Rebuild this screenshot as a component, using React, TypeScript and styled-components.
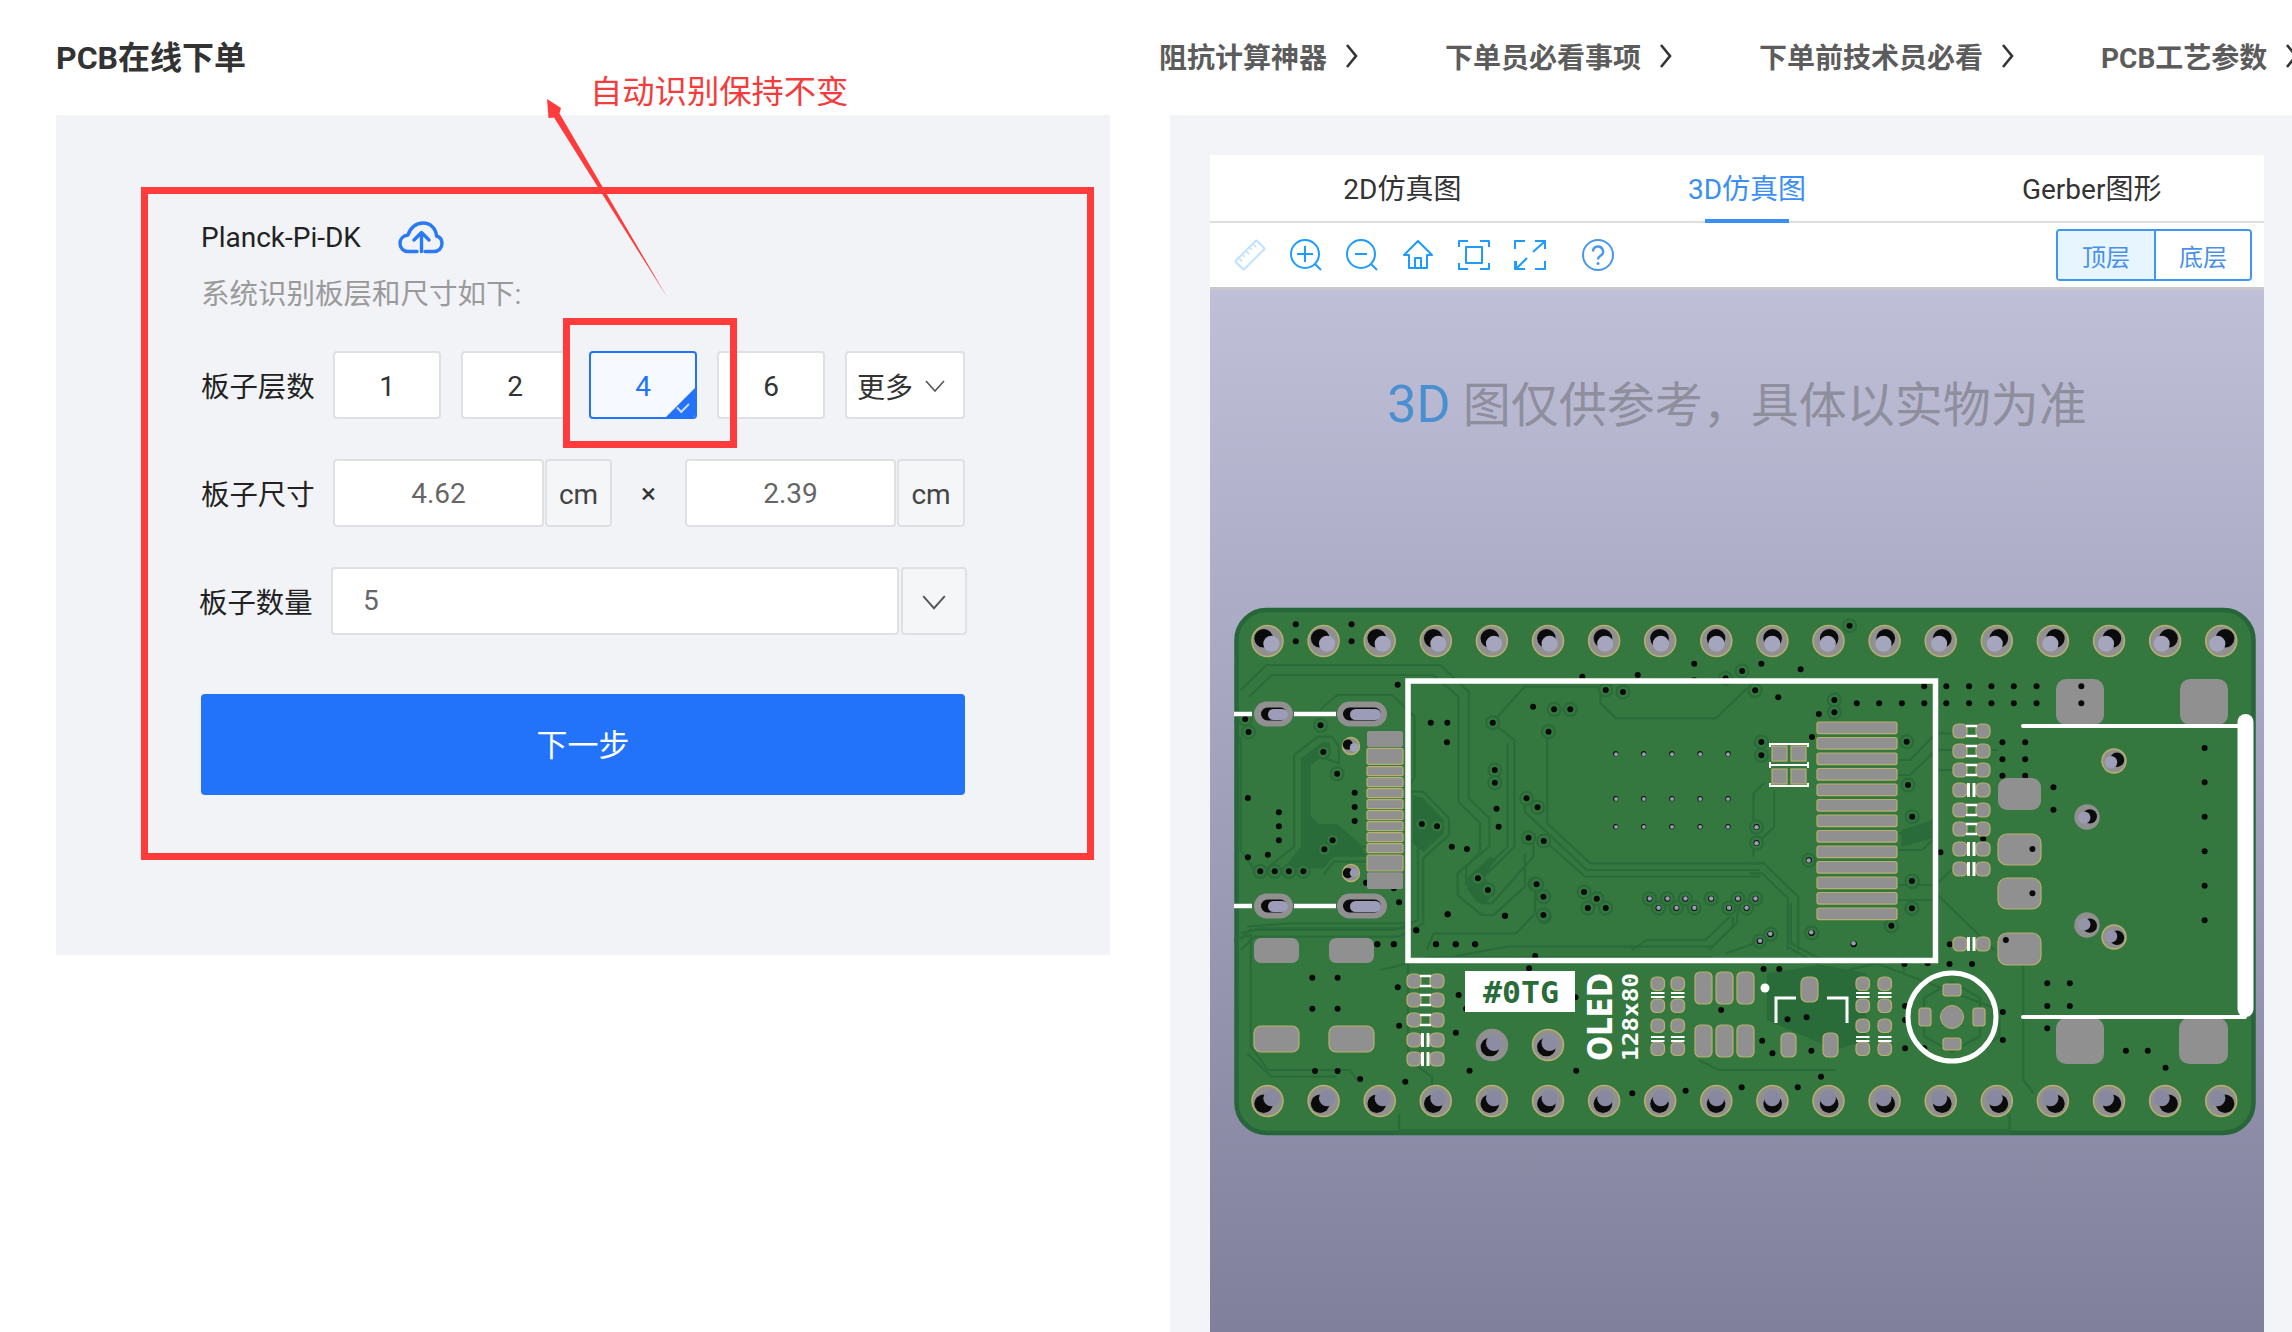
import React from 'react';
import styled, { createGlobalStyle } from 'styled-components';

const FONT = `Roboto, "Noto Sans CJK SC", "Noto Sans", sans-serif`;

const Global = createGlobalStyle`
  html, body { margin: 0; padding: 0; background: #fff; overflow: hidden; }
  * { box-sizing: border-box; }
  body { font-family: ${FONT}; }
`;

const Page = styled.div`
  position: relative;
  width: 2292px;
  height: 1332px;
  overflow: hidden;
  background: #fff;
`;

const Header = styled.header`
  height: 115px;
  padding: 0 0 5px 56px;
  display: flex;
  align-items: center;
  white-space: nowrap;
`;

const Title = styled.h1`
  margin: 0;
  width: 1103px;
  flex: none;
  font-size: 32px;
  font-weight: 700;
  color: #333;
`;

const Nav = styled.nav`
  padding-top: 2px;
  display: flex;
  align-items: center;
`;

const NavItem = styled.a`
  display: flex;
  align-items: center;
  margin-right: 86px;
  font-size: 28px;
  font-weight: 700;
  color: #5c5c5c;
  flex: none;

  svg {
    margin-left: 18px;
    color: #333;
  }
`;

const Main = styled.main`
  display: flex;
  align-items: flex-start;
  gap: 60px;
  padding-left: 56px;
`;

const OrderPanel = styled.section`
  width: 1054px;
  height: 840px;
  flex: none;
  padding: 102px 0 0 145px;
  background: #f1f3f7;
`;

const FileRow = styled.div`
  height: 40px;
  display: flex;
  align-items: center;
  gap: 37px;
  font-size: 28px;
  color: #222;
`;

const Hint = styled.div`
  margin-top: 18px;
  margin-bottom: -2px;
  height: 40px;
  line-height: 40px;
  font-size: 28.500px;
  color: #9a9a9a;
`;

const FormRow = styled.div<{ $top: number; $shift?: number }>`
  margin-top: ${(p) => p.$top}px;
  margin-left: ${(p) => p.$shift ?? 0}px;
  height: 68px;
  display: flex;
  align-items: center;
`;

const Label = styled.label`
  width: 132px;
  flex: none;
  margin-top: -2px;
  font-size: 28.400px;
  color: #222;
`;

const LayerButtons = styled.div`
  display: flex;
  gap: 20px;
`;

const LayerButton = styled.button<{ $active?: boolean }>`
  position: relative;
  width: 108px;
  height: 68px;
  padding: 2px 0 0;
  overflow: hidden;
  font-family: ${FONT};
  font-size: 28px;
  color: ${(p) => (p.$active ? '#2273f9' : '#333')};
  background: ${(p) => (p.$active ? '#f6f9ff' : '#fff')};
  border: 2px solid ${(p) => (p.$active ? '#2273f9' : '#dfe0e4')};
  border-radius: 4px;

  ${(p) =>
    p.$active &&
    `
    &::after {
      content: '';
      position: absolute;
      right: 0;
      bottom: 0;
      width: 29px;
      height: 29px;
      background: #2273f9;
      clip-path: polygon(100% 0, 100% 100%, 0 100%);
    }
    &::before {
      content: '';
      position: absolute;
      z-index: 1;
      right: 6px;
      bottom: 7px;
      width: 10px;
      height: 5px;
      border-left: 2px solid #c9dcff;
      border-bottom: 2px solid #c9dcff;
      transform: rotate(-45deg);
    }
  `}
`;

const MoreButton = styled(LayerButton)`
  width: 120px;
  padding-right: 8px;
  display: flex;
  align-items: center;
  justify-content: center;
  gap: 12px;
  color: #333;
`;

const TextBox = styled.div<{ $width: number; $align?: string }>`
  width: ${(p) => p.$width}px;
  height: 68px;
  flex: none;
  display: flex;
  align-items: center;
  justify-content: ${(p) => p.$align ?? 'center'};
  padding-left: ${(p) => (p.$align ? '30px' : '0')};
  padding-bottom: ${(p) => (p.$align ? '2px' : '0')};
  font-size: 28px;
  color: #666;
  background: #fff;
  border: 2px solid #dfe0e4;
  border-radius: 4px;
`;

const AddonBox = styled.div<{ $width: number; $left?: number }>`
  width: ${(p) => p.$width}px;
  height: 68px;
  flex: none;
  margin-left: ${(p) => p.$left ?? 1}px;
  padding-top: 3px;
  display: flex;
  align-items: center;
  justify-content: center;
  font-size: 28px;
  color: #444;
  background: #f5f6f8;
  border: 2px solid #dfe0e4;
  border-radius: 4px;
`;

const Times = styled.span`
  width: 73px;
  flex: none;
  text-align: center;
  font-size: 28px;
  color: #333;
`;

const NextButton = styled.button`
  display: block;
  margin-top: 59px;
  width: 764px;
  height: 101px;
  padding: 0 0 4px;
  font-family: ${FONT};
  font-size: 31px;
  color: #fff;
  background: #2273f9;
  border: 0;
  border-radius: 4px;
`;

const PreviewPanel = styled.section`
  width: 1122px;
  height: 1217px;
  flex: none;
  padding: 40px 28px 0 40px;
  background: #f2f4f8;
`;

const Viewer = styled.div`
  height: 100%;
  display: flex;
  flex-direction: column;
  background: #fff;
`;

const Tabs = styled.div`
  height: 68px;
  flex: none;
  padding-left: 20px;
  display: flex;
  border-bottom: 2px solid #dedede;
`;

const Tab = styled.div<{ $active?: boolean }>`
  position: relative;
  flex: 1;
  padding-bottom: 2px;
  display: flex;
  align-items: center;
  justify-content: center;
  font-size: 28px;
  color: ${(p) => (p.$active ? '#3a8ef6' : '#333')};

  ${(p) =>
    p.$active &&
    `
    &::after {
      content: '';
      position: absolute;
      left: 50%;
      bottom: -2px;
      width: 84px;
      height: 4px;
      margin-left: -42px;
      background: #3a8ef6;
    }
  `}
`;

const Toolbar = styled.div`
  height: 67px;
  flex: none;
  padding: 0 12px 0 24px;
  display: flex;
  align-items: center;
  gap: 24px;
  color: #1e9bff;
  border-bottom: 3px solid #c9c9cd;
`;

const HelpSlot = styled.span`
  margin-left: 12px;
  display: flex;
  color: #4a96f0;
`;

const SideToggle = styled.div`
  margin-left: auto;
  display: flex;
  height: 52px;
  border: 2px solid #3f97f5;
  border-radius: 4px;
  overflow: hidden;
`;

const SideButton = styled.div<{ $active?: boolean }>`
  width: 96px;
  display: flex;
  align-items: center;
  justify-content: center;
  font-size: 24px;
  color: #4a90e8;
  background: ${(p) => (p.$active ? '#e6f5ff' : '#fff')};
  & + & {
    border-left: 2px solid #3f97f5;
  }
`;

const Canvas = styled.div`
  flex: 1;
  padding-top: 85px;
  background: linear-gradient(#bfbfd8, #80809c);
`;

const Notice = styled.div`
  height: 60px;
  line-height: 60px;
  text-align: center;
  font-size: 48px;
  color: #8e8e9c;

  b {
    font-size: 52px;
    font-weight: 400;
    color: #4a8fd0;
  }
`;

const Board = styled.svg`
  display: block;
  margin: 171px 0 0 24px;
`;

const MarkBox = styled.div<{ $x: number; $y: number; $w: number; $h: number }>`
  position: absolute;
  left: ${(p) => p.$x}px;
  top: ${(p) => p.$y}px;
  width: ${(p) => p.$w}px;
  height: ${(p) => p.$h}px;
  border: 7px solid #ff3b3b;
  pointer-events: none;
`;

const MarkText = styled.div`
  position: absolute;
  left: 590px;
  top: 70px;
  font-size: 32.300px;
  line-height: 44px;
  color: #f53b3b;
`;

const MarkArrow = styled.svg`
  position: absolute;
  left: 530px;
  top: 90px;
`;

/* ---- icons ---- */
const Chevron = ({ dir, size = 20, color = '#555' }: { dir: 'right' | 'down'; size?: number; color?: string }) =>
  dir === 'right' ? (
    <svg width="14" height="26" viewBox="0 0 14 26" fill="none" stroke="currentColor" strokeWidth="2.6">
      <path d="M2 2l9 11-9 11" />
    </svg>
  ) : (
    <svg width={size} height={size * 0.6} viewBox="0 0 20 12" fill="none" stroke={color} strokeWidth="1.6">
      <path d="M1 1l9 10 9-10" />
    </svg>
  );

const CloudIcon = () => (
  <svg width="46" height="33" viewBox="0 0 46 33" fill="none" stroke="#2a7af5" strokeWidth="3.400" strokeLinecap="round" strokeLinejoin="round">
    <path d="M19 30.500H10C5.500 30.500 2 27 2 22.500c0-4.500 3.300-8 8-8.500C12 7 18 2 25 2c7.500 0 13 5.500 13.500 13 3.500 1 5.500 4 5.500 7.500 0 4.500-3.500 8-8 8h-9" />
    <path d="M23.500 30.500V11.500M16 19l7.500-7.500L31 19" />
  </svg>
);

const IconSvg: React.FC<{ children: React.ReactNode }> = ({ children }) => (
  <svg width="32" height="32" viewBox="0 0 32 32" fill="none" stroke="currentColor" strokeWidth="2" strokeLinejoin="round">
    {children}
  </svg>
);

const ToolIcons = () => (
  <>
    <IconSvg>
      <g stroke="#bfe2ff" transform="rotate(-45 16 16)">
        <rect x="1" y="10" width="30" height="12" rx="1.500" />
        <path d="M6 10v5M11 10v3.500M16 10v5M21 10v3.500M26 10v5" strokeWidth="1.500" />
      </g>
    </IconSvg>
    <IconSvg>
      <circle cx="15" cy="15" r="14" />
      <path d="M15 7v16M7 15h16M25 25l6 6" />
    </IconSvg>
    <IconSvg>
      <circle cx="15" cy="15" r="14" />
      <path d="M9 15h12M25 25l6 6" />
    </IconSvg>
    <IconSvg>
      <path d="M16 2L2 16h5v13h18V16h5z" />
      <path d="M13 29V19h6v10" />
    </IconSvg>
    <IconSvg>
      <path d="M1 8V2h9M22 2h9v6M31 24v6h-9M10 30H1v-6" />
      <rect x="8" y="8" width="16" height="16" />
    </IconSvg>
    <IconSvg>
      <path d="M1 10V2h10M21 2h10v8M31 22v8H21M11 30H1v-8" />
      <path d="M19 13L30 3M24 2h7v7M13 19L3 29M2 22v8h8" />
    </IconSvg>
    <HelpSlot>
      <IconSvg>
        <circle cx="16" cy="16" r="15" />
        <path d="M11 12.500a5 5 0 1 1 7.500 4.300c-1.700 1-2.500 1.700-2.500 3.700" strokeWidth="2.400" />
        <circle cx="16" cy="24.500" r="1.500" fill="currentColor" stroke="none" />
      </IconSvg>
    </HelpSlot>
  </>
);

/* ---- board drawing, coordinates are page pixels ---- */
type P = [number, number];
const z4 = (x: number, y: number): P => [1220 + x * 0.3444, 590 + y / 3];
const z5 = (x: number, y: number): P => [1750 + x * 0.3444, 590 + y / 3];
const z6 = (x: number, y: number): P => [1220 + x * 0.6837, 880 + y / 3];

const GOLD = '#b9b06e';
const PAD = '#909090';
const TRACE = '#2a6b3a';
const BOARD = '#34773f';
const HOLE_COLS = Array.from({ length: 18 }, (_, i) => 1267.5 + i * 56.1);

const pairs = (s: string, map: (x: number, y: number) => P): P[] => {
  const n = s.trim().split(/[\s,]+/).map(Number);
  const out: P[] = [];
  for (let i = 0; i < n.length; i += 2) out.push(map(n[i], n[i + 1]));
  return out;
};

const Through = ({ x, y, r = 15.500, gold = true }: { x: number; y: number; r?: number; gold?: boolean }) => {
  const ox = ((1745 - x) / 480) * 6.500;
  const oy = ((870 - y) / 230) * 4.500;
  const shade = Math.round(168 - ((y - 600) / 540) * 34);
  return (
    <g>
      <circle cx={x} cy={y} r={r} fill={PAD} stroke={gold ? GOLD : PAD} strokeWidth="1.500" />
      <circle cx={x - ox * 0.6} cy={y - oy * 0.6} r={r * 0.6} fill="#0b0b0b" />
      <circle cx={x + ox * 0.6} cy={y + oy * 0.6} r={r * 0.52} fill={`rgb(${shade},${shade},${shade + 24})`} />
    </g>
  );
};

const Via = ({ p, ring, grey, r = 3 }: { p: P; ring?: boolean; grey?: boolean; r?: number }) => (
  <g>
    {ring && <circle cx={p[0]} cy={p[1]} r={r + 3.500} fill={BOARD} stroke={TRACE} strokeWidth="2" />}
    <circle cx={p[0]} cy={p[1]} r={r} fill="#0a0a0a" />
    {grey && <circle cx={p[0] + (1745 - p[0]) / 400} cy={p[1] + (870 - p[1]) / 200} r={r * 0.75} fill="#9a9ab4" />}
  </g>
);

const Pad = ({ x, y, w, h, r = 3, gold = true }: { x: number; y: number; w: number; h: number; r?: number; gold?: boolean }) => (
  <rect x={x} y={y} width={w} height={h} rx={r} fill={PAD} stroke={gold ? GOLD : 'none'} strokeWidth="1.200" />
);

const Line = ({ a, b, w = 2.500 }: { a: P; b: P; w?: number }) => (
  <line x1={a[0]} y1={a[1]} x2={b[0]} y2={b[1]} stroke="#fff" strokeWidth={w} />
);

const traces4 = [
  '60 300 135 225 640 225 722 305 722 625 782 685 782 770 690 850 690 915 760 975 795 975 885 890 885 790',
  '85 320 150 255 620 255 692 320 692 635 755 700 755 785 715 830 715 880 760 940 790 940 910 800 910 760',
  '215 495 285 440 325 440 345 470 345 520 290 500 260 525 260 680 285 705 340 705 410 770 425 770',
  '290 360 340 315 500 315 565 380 565 560 555 580',
  '790 398 885 290 1105 290 1105 340 1150 385 1440 385 1530 295',
  '790 398 855 450 855 770 765 860',
  '835 460 835 770 770 835',
  '950 425 950 700 1075 820 1568 820',
  '885 625 885 665 1065 840 1568 840',
  '940 750 1060 860 1568 860',
  '555 605 590 605 665 685 665 735 590 805 590 1000 520 1040 100 1040 60 1080',
  '560 750 575 750 575 990 510 1020 85 1020 60 1050',
  '60 440 60 780 100 840',
  '215 495 215 770 130 840 100 840',
  '300 855 330 815 425 815',
  '600 1080 620 1030 860 1030 915 970 915 880',
  '1195 1080 1240 1050 1410 1050 1480 980',
  '1420 1080 1500 1000 1505 950',
];
const traces5 = [
  '430 510 465 510 530 440', '430 555 465 555 530 490', '430 730 490 730 530 690', '430 780 500 780 530 750',
  '430 885 530 885', '430 930 530 930', '0 820 40 820 140 920 140 1080', '0 850 35 850 110 925 110 1080',
  '545 880 600 825', '545 915 710 1080', '70 600 70 710 10 770 10 800', '40 580 10 610 10 690',
  '545 430 590 430', '545 480 590 480', '545 540 590 540', '700 480 720 480',
];
const traces6 = [
  '40 140 100 130 270 130', '30 160 60 145 270 145', '20 180 45 165 45 500 70 570 190 570 200 600',
  '40 520 75 590 170 590', '262 700 262 748', '1155 700 1155 748', '1175 240 1175 600 1190 640',
  '235 270 275 250 275 540 310 590 310 630', '340 230 420 200 720 200', '300 232 720 232',
  '900 280 960 250 1140 390 1140 470 1100 520', '700 540 730 570 900 570', '1000 230 1000 280',
  '830 200 880 260', '720 200 750 140 750 110', '810 170 740 220', '1050 40 1050 220', '835 70 835 190 880 240',
];

const viaPlain4 = '220 103 220 154 382 103 382 154 516 284 612 398 660 398 659 457 81 624 171 667 171 709 171 751 81 802 139 794 391 608 391 651 391 693 673 770 717 777 661 973 827 977 909 350 803 656 809 710 424 878 505 895 520 937 570 1021 627 1063 684 1063 741 1063 457 1063 505 1063 139 1063 1052 260 1213 255 1377 221 1377 271';
const viaRing4 = '73 387 83 426 292 406 300 486 340 551 117 844 159 844 200 844 242 844 327 751 303 778 586 702 630 709 792 398 954 425 798 540 798 578 890 625 922 652 896 743 940 753 749 865 778 900 914 882 940 920 942 979 1057 906 1094 926 1068 954 1120 954 970 358 1017 358 1120 300 1170 306 1468 265 1516 243 1553 301';
const viaGrey4 = '1247 926 1299 926 1351 926 1273 954 1325 954 1377 954 1426 926 1478 954 1504 926 1529 954 1555 926';
const viaGrid = [1149, 1230, 1312, 1394, 1475].flatMap((x) => [491, 626, 710].map((y) => z4(x, y)));
const viaPlain5 = '570 289 636 289 701 289 766 289 832 289 570 340 636 340 701 340 766 340 832 340 506 289 310 340 375 340 441 340 506 340 962 289 962 340 733 457 799 457 733 508 799 508 733 557 799 557 881 592 881 659 820 777 820 910 743 1050 1320 474 1320 577 1320 680 1320 784 1320 887 1320 991 33 221 147 238 82 322 200 372 180 441 301 1063 677 746 553 787 580 1063';
const viaRing5 = '289 107 245 330 245 367 455 455 459 585 471 680 473 875 470 954 410 1008 33 456 33 496 15 301';
const viaGrey5 = '19 711 19 759 171 811 16 926 179 1029 60 1033 28 1053';
const viaPlain6 = '70 193 230 193 254 193 135 293 172 293 135 386 172 386 260 322 262 437 349 345 345 458 360 386 365 572 521 572 520 352 139 573 172 573 205 597 271 605 603 640 681 632 763 622 845 622 879 590 316 193 345 193 373 193 461 228 452 265 1001 252 1035 250 1067 252 1100 252 733 390 830 418 858 412 700 445 793 482 808 520 865 512 1002 378 1002 420 1145 396 1145 480 1030 505 1002 505 1210 310 1243 310 1210 378 1243 378 1210 445 1325 512 1357 512 1383 563 333 103 417 107 287 151 1150 180 1150 232 795 267 818 267';
const viaRing6 = '463 13 473 50 473 105 982 137 1012 85 1012 3';
const viaGrey6 = '927 191 865 158 790 183 805 162';

const connectorPads: [number, number, boolean][] = [
  [423, 471, false], [475, 523, true], [530, 557, true], [563, 590, true], [596, 623, true], [629, 656, true],
  [662, 689, true], [695, 722, true], [728, 755, true], [761, 788, true], [795, 843, true], [847, 897, false],
];
const finePads = Array.from({ length: 13 }, (_, i) => 722 + i * 15.500);
const chipRows: [number, 'h' | 'v'][] = [
  [731, 'h'], [751, 'h'], [770, 'h'], [790, 'v'], [810, 'h'], [829, 'h'], [849, 'v'], [869, 'v'], [944, 'v'],
];
const chipRowsLow: [number, 'h' | 'v'][] = [[981, 'h'], [1000, 'h'], [1020, 'h'], [1040, 'v'], [1059, 'v']];
const pairRows = [977, 999, 1019, 1042];

const Chip = ({ x, y, kind }: { x: number; y: number; kind: 'h' | 'v' }) => (
  <g>
    <Pad x={x} y={y - 7} w={14} h={14} r={5} />
    <Pad x={x + 23} y={y - 7} w={14} h={14} r={5} />
    {kind === 'h' ? (
      <>
        <Line a={[x + 13, y - 5]} b={[x + 24, y - 5]} />
        <Line a={[x + 13, y + 5]} b={[x + 24, y + 5]} />
      </>
    ) : (
      <>
        <Line a={[x + 15.500, y - 7]} b={[x + 15.500, y + 7]} w={3} />
        <Line a={[x + 21, y - 7]} b={[x + 21, y + 7]} w={3} />
      </>
    )}
  </g>
);

const PcbBoard = () => (
  <Board width="1022" height="530" viewBox="1234 606 1022 530">
    <rect x="1236.500" y="610" width="1017" height="523" rx="30" fill={BOARD} stroke="#27653a" strokeWidth="4.500" />

    {/* copper, slightly darker than the board */}
    <path
      d={`M${pairs('235 505 300 455 320 460 320 490 260 520 260 680 285 705 340 705 410 770 425 800 330 800 300 835 185 835 235 770', z4).join('L')}Z`}
      fill={TRACE}
    />
    <path d={`M${pairs('560 615 590 625 650 690 650 730 590 785 560 760', z4).join('L')}Z`} fill={TRACE} />
    <path d={`M${pairs('720 860 785 800 800 810 765 860 800 905 770 940 745 935 720 900', z4).join('L')}Z`} fill={TRACE} />
    <path d={`M${pairs('262 748 1155 748 1155 765 262 765', z6).join('L')}Z`} fill={TRACE} />
    <path d={`M${pairs('800 280 880 255 945 280 945 480 900 510 800 420', z6).join('L')}Z`} fill={TRACE} />
    <path d={`M${pairs('440 720 530 690 530 745 440 770', z5).join('L')}Z`} fill={TRACE} />
    <g fill="none" stroke={TRACE} strokeWidth="2.200">
      {traces4.map((t) => <polyline key={t} points={pairs(t, z4).join(' ')} />)}
      {traces5.map((t) => <polyline key={t} points={pairs(t, z5).join(' ')} />)}
      {traces6.map((t) => <polyline key={t} points={pairs(t, z6).join(' ')} />)}
    </g>

    {/* vias */}
    {pairs(viaRing4, z4).map((p, i) => <Via key={`a${i}`} p={p} ring />)}
    {pairs(viaRing5, z5).map((p, i) => <Via key={`b${i}`} p={p} ring />)}
    {pairs(viaRing6, z6).map((p, i) => <Via key={`c${i}`} p={p} ring />)}
    {pairs(viaPlain4, z4).map((p, i) => <Via key={`d${i}`} p={p} />)}
    {pairs(viaPlain5, z5).map((p, i) => <Via key={`e${i}`} p={p} />)}
    {pairs(viaPlain6, z6).map((p, i) => <Via key={`f${i}`} p={p} />)}
    {pairs(viaGrey4, z4).map((p, i) => <Via key={`g${i}`} p={p} ring grey />)}
    {pairs(viaGrey5, z5).map((p, i) => <Via key={`h${i}`} p={p} ring grey />)}
    {pairs(viaGrey6, z6).map((p, i) => <Via key={`i${i}`} p={p} grey />)}
    {viaGrid.map((p, i) => <Via key={`j${i}`} p={p} grey r={2.600} />)}

    {/* header rows */}
    {HOLE_COLS.map((x) => <Through key={`t${x}`} x={x} y={641} />)}
    {HOLE_COLS.map((x) => <Through key={`u${x}`} x={x} y={1101} />)}

    {/* USB slots */}
    {[714, 906].map((y) => (
      <g key={y}>
        <rect x="1254" y={y - 12.500} width="39" height="25" rx="12.500" fill={PAD} />
        <rect x="1261" y={y - 6.500} width="26" height="13" rx="6.500" fill="#0b0b0b" />
        <rect x="1268" y={y - 5} width="20" height="11" rx="5.500" fill="#9c9cb8" />
        <rect x="1337" y={y - 12.500} width="50" height="25" rx="12.500" fill={PAD} />
        <rect x="1343" y={y - 6.500} width="38" height="13" rx="6.500" fill="#0b0b0b" />
        <rect x="1350" y={y - 5} width="31" height="11" rx="5.500" fill="#9c9cb8" />
        <Line a={[1234, y]} b={[1252, y]} w={4.500} />
        <Line a={[1294, y]} b={[1336, y]} w={4.500} />
      </g>
    ))}
    <Through x={1351} y={746} r={8.500} />
    <Through x={1351} y={873} r={8.500} />

    {/* USB connector pads */}
    {connectorPads.map(([a, b, g]) => (
      <Pad key={a} x={1367} y={590 + a / 3} w={36} h={(b - a) / 3} r={2} gold={g} />
    ))}

    {/* fine pitch pads */}
    {finePads.map((y) => <Pad key={y} x={1817} y={y} w={80} h={11.600} r={2} />)}
    {[1772, 1791].flatMap((x) => [746, 769].map((y) => <Pad key={`${x}${y}`} x={x} y={y} w={15} h={15} r={0} />))}
    <path d="M1770 747v-3h38v3M1770 762v3h38v-3M1770 768v-3M1808 768v-3M1770 783v3h38v-3" fill="none" stroke="#fff" strokeWidth="2" />

    {chipRows.map(([y, k]) => <Chip key={y} x={1953} y={y} kind={k} />)}
    {chipRowsLow.map(([y, k]) => <Chip key={y} x={1407} y={y} kind={k} />)}

    {/* big mounting pads */}
    <Pad x={2056} y={679} w={48} h={46} r={10} gold={false} />
    <Pad x={2180} y={679} w={48} h={46} r={10} gold={false} />
    <Pad x={2056} y={1018} w={48} h={46} r={10} gold={false} />
    <Pad x={2179} y={1018} w={49} h={46} r={10} gold={false} />
    <Pad x={1998} y={778} w={43} h={32} r={9} gold={false} />
    <Pad x={1998} y={834} w={43} h={31} r={9} />
    <Pad x={1998} y={878} w={43} h={31} r={9} />
    <Pad x={1998} y={933} w={43} h={32} r={9} />
    <Pad x={1254} y={938} w={45} h={25} r={7} gold={false} />
    <Pad x={1329} y={938} w={45} h={25} r={7} gold={false} />
    <Pad x={1254} y={1026} w={45} h={26} r={7} />
    <Pad x={1329} y={1026} w={45} h={26} r={7} />
    {pairs('820 777 820 910 743 1050', z5).map((p) => <Via key={p[1]} p={p} />)}
    {pairs('962 289 962 340', z5).map((p) => <Via key={p[1]} p={p} />)}

    {/* connector drill holes */}
    <Through x={2114} y={761} r={12} />
    <Through x={2087} y={817} r={12} gold={false} />
    <Through x={2087} y={925} r={12} gold={false} />
    <Through x={2114} y={937} r={12} />
    <Through x={1492} y={1045} r={15.500} gold={false} />
    <Through x={1548} y={1045} r={15.500} />

    {/* lower component groups */}
    {[1651, 1671, 1856, 1878].flatMap((x) =>
      pairRows.map((y) => <Pad key={`${x}-${y}`} x={x} y={y} w={13.500} h={13.500} r={5} />)
    )}
    {[1651, 1671, 1856, 1878].flatMap((x) =>
      [993, 1037].flatMap((y) => [
        <Line key={`${x}a${y}`} a={[x, y]} b={[x + 13.500, y]} w={2} />,
        <Line key={`${x}b${y}`} a={[x, y + 4]} b={[x + 13.500, y + 4]} w={2} />,
      ])
    )}
    {[1695, 1716, 1737].flatMap((x) => [972, 1025].map((y) => <Pad key={`${x}_${y}`} x={x} y={y} w={17} h={32} r={5} />))}
    <Pad x={1801} y={977} w={17} h={25} r={6} />
    <Pad x={1781} y={1033} w={15} h={24} r={5} />
    <Pad x={1823} y={1033} w={15} h={24} r={5} />
    <circle cx="1765" cy="988" r="4.500" fill="#fff" />
    <path d="M1776 1023v-25h20M1847 1023v-25h-20" fill="none" stroke="#fff" strokeWidth="3" />

    {/* speaker / tactile ring */}
    <circle cx="1952" cy="1017" r="44" fill="none" stroke="#fff" strokeWidth="5" />
    <path d="M1952 982L1980 998V1036L1952 1052L1924 1036V998Z" fill="none" stroke={TRACE} strokeWidth="2.200" />
    <circle cx="1952" cy="1017" r="11.500" fill={PAD} stroke={GOLD} />
    <Pad x={1943} y={984} w={18} h={12} />
    <Pad x={1943} y={1038} w={18} h={12} />
    <Pad x={1919} y={1008} w={12} h={18} />
    <Pad x={1973} y={1008} w={12} h={18} />

    {/* silkscreen */}
    <rect x="1408" y="681" width="527.500" height="279.500" fill="none" stroke="#fff" strokeWidth="5.500" />
    <path d="M2023 726H2245" stroke="#fff" strokeWidth="4" strokeLinecap="round" />
    <path d="M2023 1017H2245" stroke="#fff" strokeWidth="4" strokeLinecap="round" />
    <path d="M2245.500 722V1009" stroke="#fff" strokeWidth="16" strokeLinecap="round" />
    <rect x="1465" y="971" width="110" height="41" fill="#fff" />
    <text x="1483" y="1003" fontFamily='"DejaVu Sans Mono", monospace' fontWeight="700" fontSize="31" fill="#2a6b3a" textLength="76" lengthAdjust="spacingAndGlyphs">
      #0TG
    </text>
    <text transform="translate(1612 1061) rotate(-90)" fontFamily='"DejaVu Sans", sans-serif' fontWeight="700" fontSize="34" fill="#fff" textLength="88" lengthAdjust="spacingAndGlyphs">
      OLED
    </text>
    <text transform="translate(1638 1061) rotate(-90)" fontFamily='"DejaVu Sans Mono", monospace' fontWeight="700" fontSize="22" fill="#fff" textLength="88" lengthAdjust="spacingAndGlyphs">
      128x80
    </text>
  </Board>
);

export default function App() {
  return (
    <Page>
      <Global />
      <Header>
        <Title>PCB在线下单</Title>
        <Nav>
          {['阻抗计算神器', '下单员必看事项', '下单前技术员必看', 'PCB工艺参数'].map((t) => (
            <NavItem key={t}>
              {t}
              <Chevron dir="right" />
            </NavItem>
          ))}
        </Nav>
      </Header>

      <Main>
        <OrderPanel>
          <FileRow>
            Planck-Pi-DK
            <CloudIcon />
          </FileRow>
          <Hint>系统识别板层和尺寸如下:</Hint>

          <FormRow $top={38}>
            <Label>板子层数</Label>
            <LayerButtons>
              <LayerButton>1</LayerButton>
              <LayerButton>2</LayerButton>
              <LayerButton $active>4</LayerButton>
              <LayerButton>6</LayerButton>
              <MoreButton>
                更多
                <Chevron dir="down" />
              </MoreButton>
            </LayerButtons>
          </FormRow>

          <FormRow $top={40}>
            <Label>板子尺寸</Label>
            <TextBox $width={211}>4.62</TextBox>
            <AddonBox $width={67}>cm</AddonBox>
            <Times>×</Times>
            <TextBox $width={211}>2.39</TextBox>
            <AddonBox $width={68}>cm</AddonBox>
          </FormRow>

          <FormRow $top={40} $shift={-2}>
            <Label>板子数量</Label>
            <TextBox $width={568} $align="flex-start">5</TextBox>
            <AddonBox $width={66} $left={2}>
              <Chevron dir="down" size={24} />
            </AddonBox>
          </FormRow>

          <NextButton>下一步</NextButton>
        </OrderPanel>

        <PreviewPanel>
          <Viewer>
            <Tabs>
              <Tab>2D仿真图</Tab>
              <Tab $active>3D仿真图</Tab>
              <Tab>Gerber图形</Tab>
            </Tabs>
            <Toolbar>
              <ToolIcons />
              <SideToggle>
                <SideButton $active>顶层</SideButton>
                <SideButton>底层</SideButton>
              </SideToggle>
            </Toolbar>
            <Canvas>
              <Notice>
                <b>3D</b> 图仅供参考，具体以实物为准
              </Notice>
              <PcbBoard />
            </Canvas>
          </Viewer>
        </PreviewPanel>
      </Main>

      {/* red review marks pasted over the page */}
      <MarkBox $x={141} $y={187} $w={953} $h={673} />
      <MarkBox $x={563} $y={318} $w={174} $h={130} />
      <MarkArrow width="150" height="220" viewBox="530 90 150 220">
        <path d="M547 99L561 108 559.500 113.500 667 297 554 117.500 548.500 118Z" fill="#ff3b3b" />
      </MarkArrow>
      <MarkText>自动识别保持不变</MarkText>
    </Page>
  );
}
